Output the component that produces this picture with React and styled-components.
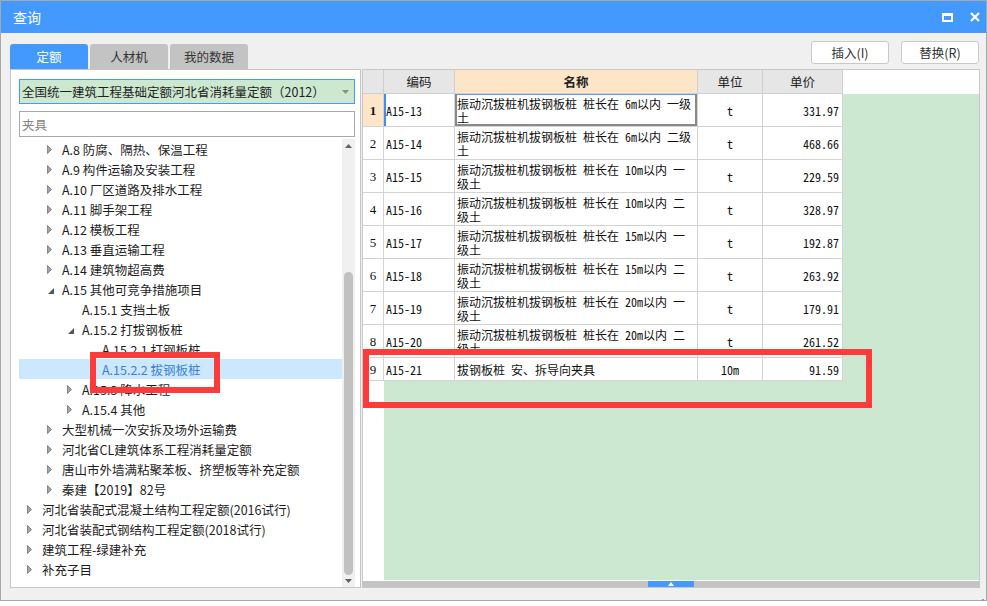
import React from 'react';
import styled, { createGlobalStyle } from 'styled-components';

const GlobalStyle = createGlobalStyle`
  html, body { margin: 0; padding: 0; background: #ffffff; }
  body { font-family: "Noto Sans CJK SC", "Noto Sans", sans-serif; color: #1e1e1e; }
  * { box-sizing: border-box; }
`;

const Window = styled.div`
  position: relative;
  width: 987px;
  height: 601px;
  border: 1px solid #a8a8a8;
  background: #f0f0f0;
  display: flex;
  flex-direction: column;
`;

const TitleBar = styled.div`
  height: 32px;
  flex: none;
  background: #4499ff;
  display: flex;
  align-items: center;
  padding: 0 6px 0 12px;
  color: #ffffff;
  font-size: 14px;
`;

const TitleText = styled.span`
  flex: 1;
  line-height: 32px;
`;

const TitleButtons = styled.div`
  display: flex;
  align-items: center;
  gap: 17px;
`;

const Content = styled.div`
  flex: 1;
  min-height: 0;
  display: flex;
  flex-direction: column;
  padding: 0 6px 12px 9px;
`;

const TopRow = styled.div`
  height: 36px;
  flex: none;
  display: flex;
  justify-content: space-between;
`;

const Tabs = styled.div`
  display: flex;
  gap: 2px;
  align-self: flex-end;
`;

const Tab = styled.div`
  width: 78px;
  height: 25px;
  border-radius: 3px 3px 0 0;
  display: flex;
  align-items: center;
  justify-content: center;
  font-size: 12.5px;
  background: ${p => (p.$active ? '#4499ff' : '#c3c3c3')};
  color: ${p => (p.$active ? '#ffffff' : '#333333')};
`;

const Buttons = styled.div`
  display: flex;
  gap: 12px;
  margin-top: 8px;
  padding-right: 1px;
  align-self: flex-start;
`;

const Button = styled.div`
  width: 78px;
  height: 23px;
  border: 1px solid #c9c9c9;
  border-radius: 3px;
  background: #ffffff;
  display: flex;
  align-items: center;
  justify-content: center;
  font-size: 12.5px;
  color: #333333;
`;

const Main = styled.div`
  flex: 1;
  min-height: 0;
  display: flex;
  gap: 1px;
`;

const LeftPanel = styled.div`
  width: 351px;
  flex: none;
  border: 1px solid #c6c6c6;
  background: #ffffff;
  display: flex;
  flex-direction: column;
  padding: 9px 5px 0 8px;
`;

const Dropdown = styled.div`
  height: 25px;
  flex: none;
  border: 1px solid #4499ff;
  background: #cce8cf;
  display: flex;
  align-items: center;
  padding: 0 5px 0 2px;
  font-size: 12.5px;
  color: #1e1e1e;
`;

const DropdownText = styled.span`
  flex: 1;
  white-space: nowrap;
`;

const SearchBox = styled.div`
  height: 26px;
  flex: none;
  margin-top: 7px;
  border: 1px solid #a9a9a9;
  display: flex;
  align-items: center;
  padding-left: 2px;
  font-size: 12.5px;
  color: #838383;
`;

const TreeArea = styled.div`
  flex: 1;
  min-height: 0;
  margin-top: 2px;
  display: flex;
`;

const TreeList = styled.div`
  flex: 1;
  overflow: hidden;
`;

const TreeRow = styled.div`
  height: 20px;
  display: flex;
  align-items: center;
  padding-left: ${p => 4 + p.$level * 20}px;
  background: ${p => (p.$selected ? '#cce8ff' : 'transparent')};
  color: ${p => (p.$selected ? '#3a7fdc' : '#1e1e1e')};
  font-size: 12.5px;
  line-height: 20px;
  white-space: nowrap;
`;

const TreeLabel = styled.span`
  padding-top: 1px;
`;

const Toggle = styled.span`
  width: 19px;
  height: 20px;
  flex: none;
  display: flex;
  align-items: center;
  padding-left: ${p => (p.$open ? 5 : 4)}px;
  padding-top: ${p => (p.$open ? 3 : 0)}px;
`;

const VScroll = styled.div`
  width: 13px;
  flex: none;
  background: #f0f0f0;
  display: flex;
  flex-direction: column;
`;

const ScrollBtn = styled.div`
  height: ${p => p.$h}px;
  flex: none;
  display: flex;
  align-items: center;
  justify-content: center;
`;

const ScrollTrack = styled.div`
  flex: 1;
  display: flex;
  flex-direction: column;
  justify-content: flex-end;
  align-items: center;
`;

const ScrollThumb = styled.div`
  width: 9px;
  height: 303px;
  border-radius: 5px;
  background: #c1c1c1;
`;

const GridPanel = styled.div`
  flex: 1;
  min-width: 0;
  border: 1px solid #c8c8c8;
  background: #ffffff;
  display: flex;
  flex-direction: column;
`;

const COLS = '21px 71px 243px 65px 80px';

const HeaderRow = styled.div`
  height: 24px;
  flex: none;
  display: grid;
  grid-template-columns: ${COLS} 1fr;
`;

const HeaderCell = styled.div`
  background: ${p => (p.$hl ? '#fde6c8' : '#e6e6e6')};
  border-right: 1px solid #cfcfcf;
  border-bottom: 1px solid #cfcfcf;
  display: flex;
  align-items: center;
  justify-content: center;
  font-size: 12.5px;
  font-weight: ${p => (p.$hl ? 700 : 400)};
  color: #222222;
`;

const HeaderFill = styled.div`
  background: #ffffff;
`;

const GridBody = styled.div`
  flex: 1;
  min-height: 0;
  display: flex;
`;

const Table = styled.div`
  width: 480px;
  flex: none;
  display: flex;
  flex-direction: column;
`;

const Row = styled.div`
  height: ${p => (p.$tall ? 33 : 23)}px;
  flex: none;
  display: grid;
  grid-template-columns: ${COLS};
  font-family: "Noto Sans Mono CJK SC", "Liberation Mono", "Noto Sans CJK SC", monospace;
  font-size: 12px;
  color: #111111;
`;

const Cell = styled.div`
  border-right: 1px solid #d3d3d3;
  border-bottom: 1px solid #d3d3d3;
  display: flex;
  align-items: center;
  justify-content: ${p => p.$align || 'flex-start'};
  padding: 1px ${p => (p.$align === 'flex-end' ? 3 : 2)}px 0 2px;
  overflow: hidden;
  white-space: nowrap;
`;

const NumCell = styled(Cell)`
  justify-content: center;
  padding: 1px 0 0;
  font-family: "Liberation Serif", serif;
  font-size: 13px;
  background: ${p => (p.$current ? '#fde6c8' : '#ffffff')};
  font-weight: ${p => (p.$current ? 700 : 400)};
`;

const CodeCell = styled(Cell)`
  box-shadow: ${p => (p.$current ? 'inset 2px 0 #3d8ef5' : 'none')};
`;

const NameCell = styled(Cell)`
  flex-direction: column;
  align-items: stretch;
  justify-content: center;
  padding-top: 2px;
  line-height: 14px;
  box-shadow: ${p =>
    p.$selected
      ? 'inset 2px 0 #8a8a8a, inset -2px 0 #8a8a8a, inset 0 -2px #8a8a8a, inset 0 1px #5aa0f0'
      : 'none'};
`;

const NameLine = styled.span`
  display: block;
  white-space: nowrap;
`;

const BelowRows = styled.div`
  flex: 1;
  display: flex;
`;

const BlankStrip = styled.div`
  width: 21px;
  flex: none;
  background: #ffffff;
`;

const GreenFill = styled.div`
  flex: 1;
  background: #cde8d0;
`;

const HScroll = styled.div`
  height: 6px;
  flex: none;
  margin-top: 1px;
  background: #c4c4c4;
  display: flex;
  justify-content: center;
`;

const HThumb = styled.div`
  width: 46px;
  background: #4499ff;
  display: flex;
  align-items: center;
  justify-content: center;
`;

const Marker = styled.div`
  position: absolute;
  left: ${p => p.$x}px;
  top: ${p => p.$y}px;
  width: ${p => p.$w}px;
  height: ${p => p.$h}px;
  border: 6px solid #fd3b3b;
  pointer-events: none;
`;

const Grip = styled.div`
  position: absolute;
  right: 1px;
  bottom: 2px;
  width: 9px;
  height: 9px;
`;

const tree = [
  { level: 1, label: 'A.8 防腐、隔热、保温工程', state: 'closed' },
  { level: 1, label: 'A.9 构件运输及安装工程', state: 'closed' },
  { level: 1, label: 'A.10 厂区道路及排水工程', state: 'closed' },
  { level: 1, label: 'A.11 脚手架工程', state: 'closed' },
  { level: 1, label: 'A.12 模板工程', state: 'closed' },
  { level: 1, label: 'A.13 垂直运输工程', state: 'closed' },
  { level: 1, label: 'A.14 建筑物超高费', state: 'closed' },
  { level: 1, label: 'A.15 其他可竞争措施项目', state: 'open' },
  { level: 2, label: 'A.15.1 支挡土板', state: 'leaf' },
  { level: 2, label: 'A.15.2 打拔钢板桩', state: 'open' },
  { level: 3, label: 'A.15.2.1 打钢板桩', state: 'leaf' },
  { level: 3, label: 'A.15.2.2 拔钢板桩', state: 'leaf', selected: true },
  { level: 2, label: 'A.15.3 降水工程', state: 'closed' },
  { level: 2, label: 'A.15.4 其他', state: 'closed' },
  { level: 1, label: '大型机械一次安拆及场外运输费', state: 'closed' },
  { level: 1, label: '河北省CL建筑体系工程消耗量定额', state: 'closed' },
  { level: 1, label: '唐山市外墙满粘聚苯板、挤塑板等补充定额', state: 'closed' },
  { level: 1, label: '秦建【2019】82号', state: 'closed' },
  { level: 0, label: '河北省装配式混凝土结构工程定额(2016试行)', state: 'closed' },
  { level: 0, label: '河北省装配式钢结构工程定额(2018试行)', state: 'closed' },
  { level: 0, label: '建筑工程-绿建补充', state: 'closed' },
  { level: 0, label: '补充子目', state: 'closed' },
];

const P = '振动沉拔桩机拔钢板桩 桩长在 ';
const rows = [
  { code: 'A15-13', name: [P + '6m以内 一级', '土'], unit: 't', price: '331.97' },
  { code: 'A15-14', name: [P + '6m以内 二级', '土'], unit: 't', price: '468.66' },
  { code: 'A15-15', name: [P + '10m以内 一', '级土'], unit: 't', price: '229.59' },
  { code: 'A15-16', name: [P + '10m以内 二', '级土'], unit: 't', price: '328.97' },
  { code: 'A15-17', name: [P + '15m以内 一', '级土'], unit: 't', price: '192.87' },
  { code: 'A15-18', name: [P + '15m以内 二', '级土'], unit: 't', price: '263.92' },
  { code: 'A15-19', name: [P + '20m以内 一', '级土'], unit: 't', price: '179.91' },
  { code: 'A15-20', name: [P + '20m以内 二', '级土'], unit: 't', price: '261.52' },
  { code: 'A15-21', name: ['拔钢板桩 安、拆导向夹具'], unit: '10m', price: '91.59' },
];

const ClosedArrow = () => (
  <svg width="5" height="9" viewBox="0 0 5 9">
    <path d="M0.5 0.5 L4.5 4.5 L0.5 8.5 Z" fill="#a3a3a3" stroke="#737373" strokeWidth="0.8" />
  </svg>
);

const OpenArrow = () => (
  <svg width="6" height="6" viewBox="0 0 6 6">
    <path d="M6 0 L6 6 L0 6 Z" fill="#555555" />
  </svg>
);

const Tri = ({ up, color = '#606060', w = 7, h = 4 }) => (
  <svg width={w} height={h} viewBox={`0 0 ${w} ${h}`}>
    <path d={up ? `M0 ${h} L${w / 2} 0 L${w} ${h} Z` : `M0 0 L${w} 0 L${w / 2} ${h} Z`} fill={color} />
  </svg>
);

export default function App() {
  return (
    <>
      <GlobalStyle />
      <Window>
        <TitleBar>
          <TitleText>查询</TitleText>
          <TitleButtons>
            <svg width="11" height="9" viewBox="0 0 11 9">
              <rect x="1" y="1.5" width="9" height="6.5" fill="none" stroke="#ffffff" strokeWidth="2" />
              <rect x="0" y="0" width="11" height="3" fill="#ffffff" />
            </svg>
            <svg width="10" height="10" viewBox="0 0 10 10">
              <path d="M1 1 L9 9 M9 1 L1 9" stroke="#ffffff" strokeWidth="2.2" />
            </svg>
          </TitleButtons>
        </TitleBar>
        <Content>
          <TopRow>
            <Tabs>
              <Tab $active>定额</Tab>
              <Tab>人材机</Tab>
              <Tab>我的数据</Tab>
            </Tabs>
            <Buttons>
              <Button>插入(I)</Button>
              <Button>替换(R)</Button>
            </Buttons>
          </TopRow>
          <Main>
            <LeftPanel>
              <Dropdown>
                <DropdownText>全国统一建筑工程基础定额河北省消耗量定额（2012）</DropdownText>
                <Tri color="#8c8c8c" w={7} h={4} />
              </Dropdown>
              <SearchBox>夹具</SearchBox>
              <TreeArea>
                <TreeList>
                  {tree.map((t, i) => (
                    <TreeRow key={i} $level={t.level} $selected={t.selected}>
                      <Toggle $open={t.state === 'open'}>
                        {t.state === 'closed' && <ClosedArrow />}
                        {t.state === 'open' && <OpenArrow />}
                      </Toggle>
                      <TreeLabel>{t.label}</TreeLabel>
                    </TreeRow>
                  ))}
                </TreeList>
                <VScroll>
                  <ScrollBtn $h={14}>
                    <Tri up />
                  </ScrollBtn>
                  <ScrollTrack>
                    <ScrollThumb />
                  </ScrollTrack>
                  <ScrollBtn $h={12}>
                    <Tri />
                  </ScrollBtn>
                </VScroll>
              </TreeArea>
            </LeftPanel>
            <GridPanel>
              <HeaderRow>
                <HeaderCell />
                <HeaderCell>编码</HeaderCell>
                <HeaderCell $hl>名称</HeaderCell>
                <HeaderCell>单位</HeaderCell>
                <HeaderCell>单价</HeaderCell>
                <HeaderFill />
              </HeaderRow>
              <GridBody>
                <Table>
                  {rows.map((r, i) => (
                    <Row key={r.code} $tall={r.name.length > 1}>
                      <NumCell $current={i === 0}>{i + 1}</NumCell>
                      <CodeCell $current={i === 0}>{r.code}</CodeCell>
                      <NameCell $selected={i === 0}>
                        {r.name.map((l, j) => (
                          <NameLine key={j}>{l}</NameLine>
                        ))}
                      </NameCell>
                      <Cell $align="center">{r.unit}</Cell>
                      <Cell $align="flex-end">{r.price}</Cell>
                    </Row>
                  ))}
                  <BelowRows>
                    <BlankStrip />
                    <GreenFill />
                  </BelowRows>
                </Table>
                <GreenFill />
              </GridBody>
              <HScroll>
                <HThumb>
                  <Tri up color="#ffffff" w={6} h={4} />
                </HThumb>
              </HScroll>
            </GridPanel>
          </Main>
        </Content>
        <Marker $x={89} $y={351} $w={130} $h={41} />
        <Marker $x={362} $y={348} $w={509} $h={59} />
        <Grip>
          <svg width="9" height="9" viewBox="0 0 9 9">
            <rect x="6" y="0" width="2" height="2" fill="#9a9a9a" />
            <rect x="3" y="3" width="2" height="2" fill="#9a9a9a" />
            <rect x="6" y="3" width="2" height="2" fill="#9a9a9a" />
            <rect x="0" y="6" width="2" height="2" fill="#9a9a9a" />
            <rect x="3" y="6" width="2" height="2" fill="#9a9a9a" />
            <rect x="6" y="6" width="2" height="2" fill="#9a9a9a" />
          </svg>
        </Grip>
      </Window>
    </>
  );
}
